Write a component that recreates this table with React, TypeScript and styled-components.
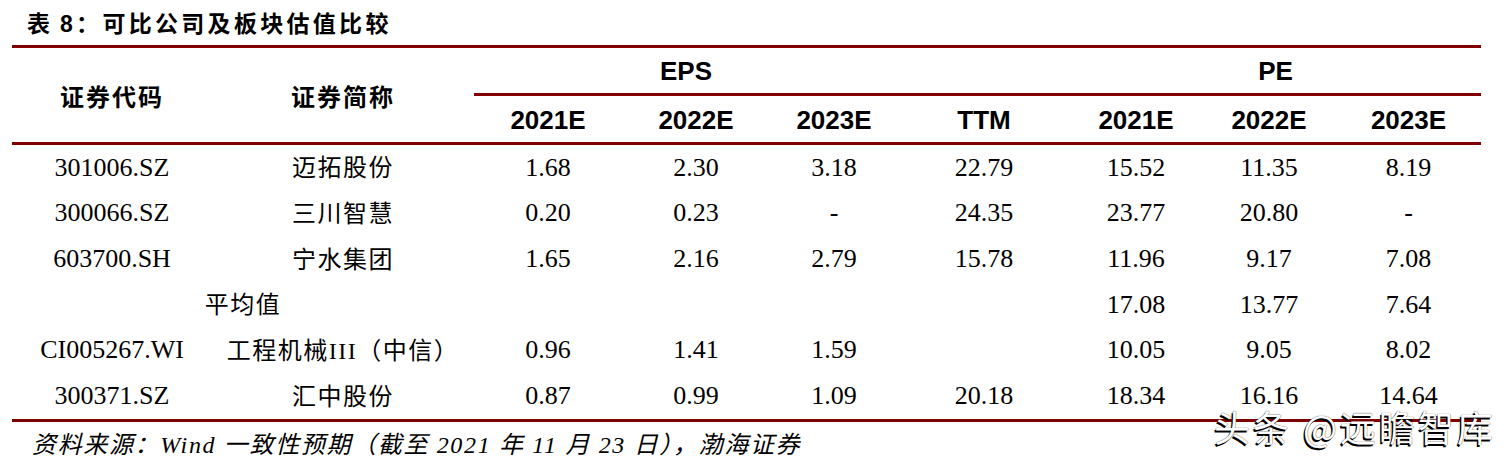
import React from "react";
import styled, { createGlobalStyle } from "styled-components";

const Global = createGlobalStyle`
  html, body { margin: 0; padding: 0; background: #fff; }
  body { font-family: "Liberation Serif", "Noto Sans CJK SC", serif; color: #000; }
`;

const RULE = "#800000";
const COLS = "200px 262px 148px 148px 128px 172px 132px 134px 145px";

const Page = styled.div`
  position: relative;
  width: 1507px;
  height: 462px;
  padding-left: 12px;
  box-sizing: border-box;
  overflow: hidden;
`;

const Title = styled.div`
  height: 45px;
  display: flex;
  align-items: center;
  padding-left: 15px;
  padding-bottom: 2px;
  box-sizing: border-box;
  font-family: "Liberation Sans", "Noto Sans CJK SC", sans-serif;
  font-weight: 700;
  font-size: 23px;
  letter-spacing: 3.3px;
  word-spacing: -3px;
  white-space: pre;
`;

const Header = styled.div`
  display: grid;
  width: 1469px;
  grid-template-columns: ${COLS};
  grid-template-rows: 48px 46px;
  border-top: 3px solid ${RULE};
  border-bottom: 3px solid ${RULE};
`;

const CnHead = styled.div<{ $col: number }>`
  grid-column: ${(p) => p.$col};
  grid-row: 1 / 3;
  display: flex;
  align-items: center;
  justify-content: center;
  font-family: "Noto Sans CJK SC", sans-serif;
  font-weight: 700;
  font-size: 24px;
  letter-spacing: 2px;
`;

const GroupHead = styled.div<{ $from: number; $to: number }>`
  grid-column: ${(p) => `${p.$from} / ${p.$to}`};
  grid-row: 1;
  display: flex;
  align-items: center;
  justify-content: center;
  border-bottom: 3px solid ${RULE};
  box-sizing: border-box;
  padding-top: 2px;
  font-family: "Liberation Sans", sans-serif;
  font-weight: 700;
  font-size: 26px;
`;

const SubHead = styled.div<{ $col: number }>`
  grid-column: ${(p) => p.$col};
  grid-row: 2;
  display: flex;
  align-items: center;
  justify-content: center;
  font-family: "Liberation Sans", sans-serif;
  font-weight: 700;
  font-size: 26px;
  padding-top: 2px;
`;

const Body = styled.div`
  display: grid;
  width: 1469px;
  grid-template-columns: ${COLS};
  grid-auto-rows: 45.67px;
  border-bottom: 3px solid ${RULE};
`;

const Cell = styled.div<{ $span?: number }>`
  grid-column: span ${(p) => p.$span ?? 1};
  display: flex;
  align-items: center;
  justify-content: center;
  font-family: "Liberation Serif", "Noto Sans CJK SC", serif;
  font-size: 26px;
  white-space: nowrap;
`;

const NameCell = styled(Cell)`
  font-size: 24px;
  letter-spacing: 1.5px;
  padding-bottom: 4px;
  box-sizing: border-box;
`;

const Footer = styled.div`
  height: 42px;
  display: flex;
  align-items: center;
  padding-left: 20px;
  font-family: "Liberation Serif", "Noto Sans CJK SC", serif;
  font-style: italic;
  font-size: 24px;
  letter-spacing: 1.65px;
  white-space: pre;
`;

const Watermark = styled.div`
  position: absolute;
  left: 1214px;
  top: 400px;
  font-family: "Noto Sans CJK SC", sans-serif;
  font-size: 36px;
  letter-spacing: 3px;
  color: #fff;
  white-space: pre;
  text-shadow: -1.5px 1.5px 0 #000, 0 0 1px #000;
`;

type Row = { code?: string; name: string; vals: string[]; merged?: boolean };

const rows: Row[] = [
  { code: "301006.SZ", name: "迈拓股份", vals: ["1.68", "2.30", "3.18", "22.79", "15.52", "11.35", "8.19"] },
  { code: "300066.SZ", name: "三川智慧", vals: ["0.20", "0.23", "-", "24.35", "23.77", "20.80", "-"] },
  { code: "603700.SH", name: "宁水集团", vals: ["1.65", "2.16", "2.79", "15.78", "11.96", "9.17", "7.08"] },
  { name: "平均值", merged: true, vals: ["", "", "", "", "17.08", "13.77", "7.64"] },
  { code: "CI005267.WI", name: "工程机械III（中信）", vals: ["0.96", "1.41", "1.59", "", "10.05", "9.05", "8.02"] },
  { code: "300371.SZ", name: "汇中股份", vals: ["0.87", "0.99", "1.09", "20.18", "18.34", "16.16", "14.64"] },
];

const years = ["2021E", "2022E", "2023E", "TTM", "2021E", "2022E", "2023E"];

export default function App() {
  return (
    <>
      <Global />
      <Page>
        <Title>表 8：可比公司及板块估值比较</Title>
        <Header>
          <CnHead $col={1}>证券代码</CnHead>
          <CnHead $col={2}>证券简称</CnHead>
          <GroupHead $from={3} $to={6}>EPS</GroupHead>
          <GroupHead $from={6} $to={7} />
          <GroupHead $from={7} $to={10}>PE</GroupHead>
          {years.map((y, i) => (
            <SubHead key={i} $col={i + 3}>
              {y}
            </SubHead>
          ))}
        </Header>
        <Body>
          {rows.map((r, ri) => (
            <React.Fragment key={ri}>
              {r.merged ? (
                <NameCell $span={2}>{r.name}</NameCell>
              ) : (
                <>
                  <Cell>{r.code}</Cell>
                  <NameCell>{r.name}</NameCell>
                </>
              )}
              {r.vals.map((v, vi) => (
                <Cell key={vi}>{v}</Cell>
              ))}
            </React.Fragment>
          ))}
        </Body>
        <Footer>资料来源：Wind 一致性预期（截至 2021 年 11 月 23 日），渤海证券</Footer>
        <Watermark>头条 @远瞻智库</Watermark>
      </Page>
    </>
  );
}
